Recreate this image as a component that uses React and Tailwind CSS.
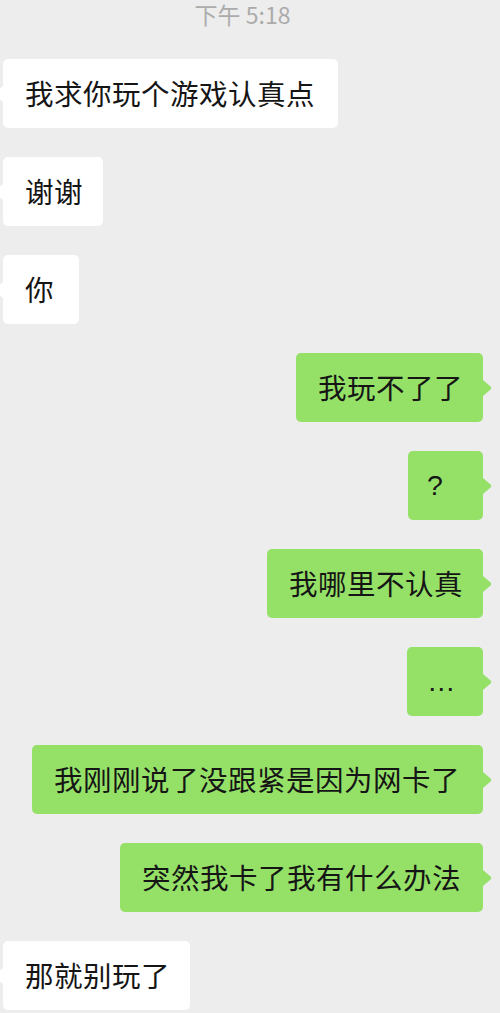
const MESSAGES = [
  { side: 'left', text: '我求你玩个游戏认真点', w: 'w-[335px]' },
  { side: 'left', text: '谢谢', w: 'w-[100px]' },
  { side: 'left', text: '你', w: 'w-[76px]' },
  { side: 'right', text: '我玩不了了', w: 'w-[187px]' },
  { side: 'right', text: '?', w: 'w-[75px]', latin: true, pad: 'pl-[19px]' },
  { side: 'right', text: '我哪里不认真', w: 'w-[216px]' },
  { side: 'right', text: '…', w: 'w-[76px]', latin: true, pad: 'pl-[20px]' },
  { side: 'right', text: '我刚刚说了没跟紧是因为网卡了', w: 'w-[451px]' },
  { side: 'right', text: '突然我卡了我有什么办法', w: 'w-[363px]' },
  { side: 'left', text: '那就别玩了', w: 'w-[187px]' },
];

function Tail({ side, color }) {
  if (side === 'right') {
    return (
      <svg
        width="9"
        height="16"
        viewBox="0 0 9 16"
        className="absolute left-full top-1/2 -translate-y-1/2"
      >
        <path d="M0 0 L7.6 6.6 Q8.8 8 7.6 9.4 L0 16 Z" fill={color} />
      </svg>
    );
  }
  return (
    <svg
      width="9"
      height="16"
      viewBox="0 0 9 16"
      className="absolute right-full top-1/2 -translate-y-1/2"
    >
      <path d="M9 0 L1.4 6.6 Q0.2 8 1.4 9.4 L9 16 Z" fill={color} />
    </svg>
  );
}

function Bubble({ msg }) {
  const isRight = msg.side === 'right';
  const color = isRight ? '#95e168' : '#ffffff';
  return (
    <div className={isRight ? 'flex justify-end pr-[17px]' : 'flex justify-start pl-[3px]'}>
      <div
        className={`relative h-[69px] ${msg.w} rounded-[5px] flex items-center ${msg.pad || 'pl-[22px]'} ${
          isRight ? 'bg-[#95e168]' : 'bg-white'
        }`}
      >
        <span
          className="whitespace-nowrap text-[28.5px] leading-none tracking-[0.5px] text-[#151515]"
          style={{
            fontFamily: msg.latin
              ? '"Liberation Sans", "Noto Sans CJK SC", sans-serif'
              : '"Noto Sans CJK SC", "Noto Sans", sans-serif',
          }}
        >
          {msg.text}
        </span>
        <Tail side={msg.side} color={color} />
      </div>
    </div>
  );
}

export default function App() {
  return (
    <main
      className="w-[500px] h-[1013px] overflow-hidden bg-[#ededed]"
      style={{ fontFamily: '"Noto Sans CJK SC", "Noto Sans", sans-serif' }}
    >
      {/* timestamp */}
      <div className="h-[59px] pt-[1px] flex justify-center pr-[15px]">
        <span className="text-[23px] leading-[26px] text-[#ababab]">下午 5:18</span>
      </div>

      {/* messages */}
      <div className="flex flex-col gap-[29px]">
        {MESSAGES.map((m, i) => (
          <Bubble key={i} msg={m} />
        ))}
      </div>
    </main>
  );
}
